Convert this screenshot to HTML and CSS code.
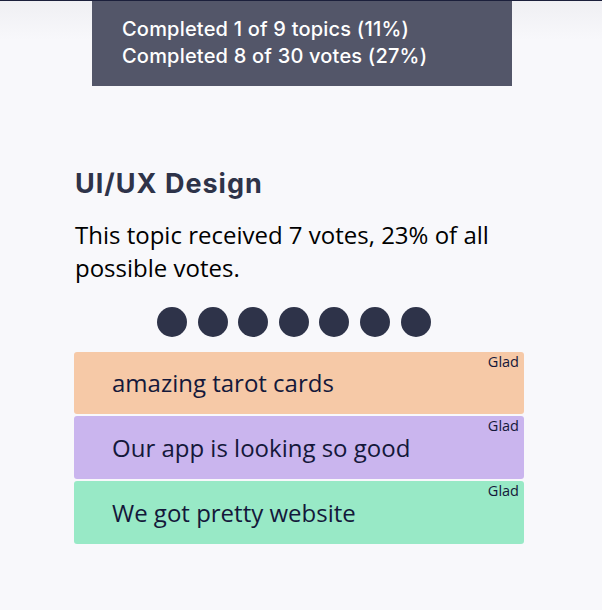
FILE: index.html
```html
<!DOCTYPE html>
<html>
<head>
<meta charset="utf-8">
<link rel="stylesheet" href="styles.css">
</head>
<body>
<div class="page">
  <div class="stats">
    <div class="stat">Completed 1 of 9 topics (11%)</div>
    <div class="stat">Completed 8 of 30 votes (27%)</div>
  </div>
  <div class="topic">
    <h2 class="title">UI/UX Design</h2>
    <p class="desc">This topic received 7 votes, 23% of all possible votes.</p>
    <div class="dots">
      <span class="dot"></span><span class="dot"></span><span class="dot"></span><span class="dot"></span><span class="dot"></span><span class="dot"></span><span class="dot"></span>
    </div>
    <div class="cards">
      <div class="card peach"><span class="tag">Glad</span><span class="text">amazing tarot cards</span></div>
      <div class="card lavender"><span class="tag">Glad</span><span class="text">Our app is looking so good</span></div>
      <div class="card mint"><span class="tag">Glad</span><span class="text">We got pretty website</span></div>
    </div>
  </div>
</div>
</body>
</html>
```
FILE: styles.css
```css
html, body {
  margin: 0;
  padding: 0;
}
body {
  background: linear-gradient(#efeff3 0, #f8f8fb 40px, #f8f8fb 100%);
  height: 610px;
  border-top: 1px solid #1b1f3b;
  box-sizing: border-box;
  font-family: "Open Sans", "Noto Sans", sans-serif;
}
.page {
  width: 602px;
}
.stats {
  margin-left: 92px;
  width: 420px;
  height: 85px;
  box-sizing: border-box;
  background: #535669;
  padding: 15px 0 0 30px;
  color: #ffffff;
  font-family: "Inter", sans-serif;
  font-weight: 500;
  font-size: 20px;
  line-height: 27px;
  letter-spacing: 0.2px;
}
.topic {
  margin-left: 74px;
  width: 450px;
  padding-top: 80px;
}
.title {
  margin: 0;
  font-family: "Inter", sans-serif;
  font-weight: 700;
  font-size: 27px;
  line-height: 36px;
  letter-spacing: 1px;
  color: #2e3349;
  padding-left: 1px;
}
.desc {
  margin: 16px 0 0 0;
  font-size: 24px;
  line-height: 33px;
  color: #000000;
  padding-left: 1px;
}
.dots {
  display: flex;
  gap: 10.6px;
  margin: 23px 0 0 83px;
}
.dot {
  width: 30px;
  height: 30px;
  border-radius: 50%;
  background: #2e3349;
}
.cards {
  display: flex;
  flex-direction: column;
  gap: 2px;
  margin-top: 15px;
}
.card {
  position: relative;
  height: 63px;
  border-radius: 3px;
  display: flex;
  align-items: center;
  padding-left: 38px;
  box-sizing: border-box;
  color: #14183a;
}
.peach { background: #f6c9a7; height: 62px; }
.lavender { background: #cab5ee; }
.mint { background: #98e9c6; }
.text {
  font-size: 24px;
  line-height: 30px;
}
.tag {
  position: absolute;
  top: 1px;
  right: 5px;
  font-size: 14.5px;
  line-height: 18px;
}
```
